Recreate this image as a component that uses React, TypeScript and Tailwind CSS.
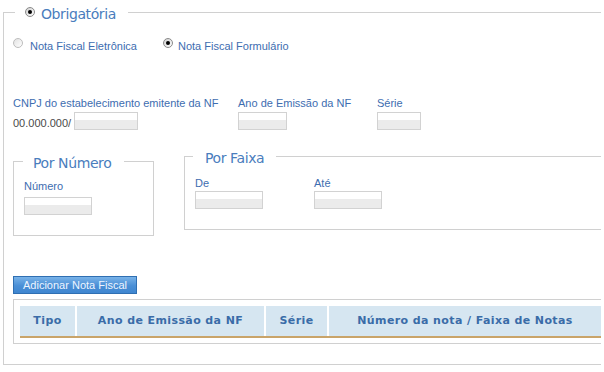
import React from "react";

const label = "text-[11px] leading-[14px] text-[#3d6db0]";
const legendText = "text-[14px] leading-[20px] text-[#4a7dbd] tracking-[-0.4px] font-['DejaVu_Sans',sans-serif]";

function Radio({ checked }: { checked?: boolean }) {
  return (
    <span
      className={`flex h-[10px] w-[10px] shrink-0 items-center justify-center rounded-full border ${
        checked
          ? "border-[#8a8a8a] bg-[linear-gradient(135deg,#cfcfcf,#ffffff)]"
          : "border-[#bdbdbd] bg-[linear-gradient(135deg,#e2e2e2,#ffffff)]"
      }`}
    >
      {checked && <span className="h-[4px] w-[4px] rounded-full bg-black" />}
    </span>
  );
}

function Input({ className }: { className: string }) {
  return (
    <div
      className={`h-[18px] shrink-0 border border-[#d2d2d2] bg-[linear-gradient(#ffffff_45%,#ebebeb_45%)] ${className}`}
    />
  );
}

export default function App() {
  return (
    <div className="h-[372px] w-[601px] overflow-hidden bg-white pl-[3px] font-['Liberation_Sans',Arial,sans-serif]">
      <fieldset className="w-[640px] border border-[#d0d0d0] pb-[20px] pl-[9px]">
        <legend className="ml-[2px] pl-[10px] pr-[12px]">
          <span className="flex h-[24px] items-start gap-[6px]">
            <span className="mt-[7px]">
              <Radio checked />
            </span>
            <span className={`${legendText} pt-[4px]`}>Obrigatória</span>
          </span>
        </legend>

        {/* tipo de nota */}
        <div className="mt-[14px] flex items-start">
          <div className="flex w-[150px] items-start gap-[7px]">
            <Radio />
            <span className={`${label} mt-[1px]`}>Nota Fiscal Eletrônica</span>
          </div>
          <div className="flex items-start gap-[5px]">
            <Radio checked />
            <span className={`${label} mt-[1px]`}>Nota Fiscal Formulário</span>
          </div>
        </div>

        {/* dados da NF */}
        <div className="mt-[43px] flex items-start">
          <div className="w-[225px]">
            <div className={label}>CNPJ do estabelecimento emitente da NF</div>
            <div className="mt-[2px] flex items-start gap-[3px]">
              <span className="mt-[4px] text-[11px] leading-[14px] text-[#4a4a4a]">00.000.000/</span>
              <Input className="w-[64px]" />
            </div>
          </div>
          <div className="w-[139px]">
            <div className={label}>Ano de Emissão da NF</div>
            <div className="mt-[2px]">
              <Input className="w-[49px]" />
            </div>
          </div>
          <div>
            <div className={label}>Série</div>
            <div className="mt-[2px]">
              <Input className="w-[44px]" />
            </div>
          </div>
        </div>

        {/* por numero / por faixa */}
        <div className="mt-[12px] flex items-start">
          <fieldset className="mt-[5px] w-[141px] border border-[#d0d0d0] pb-[20px] pl-[10px]">
            <legend className="-ml-[1px] pl-[10px] pr-[13px] pt-[4px]">
              <span className={legendText}>Por Número</span>
            </legend>
            <div className={`${label} mt-[4px]`}>Número</div>
            <div className="mt-[4px]">
              <Input className="w-[68px]" />
            </div>
          </fieldset>

          <fieldset className="ml-[30px] w-[440px] border border-[#d0d0d0] pb-[20px] pl-[10px]">
            <legend className="-ml-[2px] px-[12px] pt-[4px]">
              <span className={legendText}>Por Faixa</span>
            </legend>
            <div className="mt-[6px] flex items-start">
              <div className="w-[119px]">
                <div className={label}>De</div>
                <div className="mt-[1px]">
                  <Input className="w-[68px]" />
                </div>
              </div>
              <div>
                <div className={label}>Até</div>
                <div className="mt-[1px]">
                  <Input className="w-[68px]" />
                </div>
              </div>
            </div>
          </fieldset>
        </div>

        <button
          type="button"
          className="mt-[40px] block h-[18px] w-[124px] border border-[#2f6fb2] bg-[linear-gradient(#78b2e8,#4a8fd6_55%,#3f86d0)] text-center text-[11px] leading-[16px] text-[#eef5ff]"
        >
          Adicionar Nota Fiscal
        </button>

        {/* tabela */}
        <div className="mt-[5px] w-[620px] border border-[#d0d0d0] px-[6px] pb-[5px] pt-[6px]">
          <div className="flex gap-[2px] border-b-2 border-[#c9a46a] font-['DejaVu_Sans',sans-serif] text-[11px] font-bold tracking-[0.4px] text-[#3a6ca8]">
            <div className="flex h-[30px] w-[55px] items-center justify-center bg-[#d6e6f1]">Tipo</div>
            <div className="flex h-[30px] w-[187px] items-center justify-center bg-[#d6e6f1]">Ano de Emissão da NF</div>
            <div className="flex h-[30px] w-[61px] items-center justify-center bg-[#d6e6f1]">Série</div>
            <div className="flex h-[30px] w-[272px] items-center justify-center bg-[#d6e6f1]">Número da nota / Faixa de Notas</div>
            <div className="h-[30px] flex-1 bg-[#d6e6f1]" />
          </div>
        </div>
      </fieldset>
    </div>
  );
}
